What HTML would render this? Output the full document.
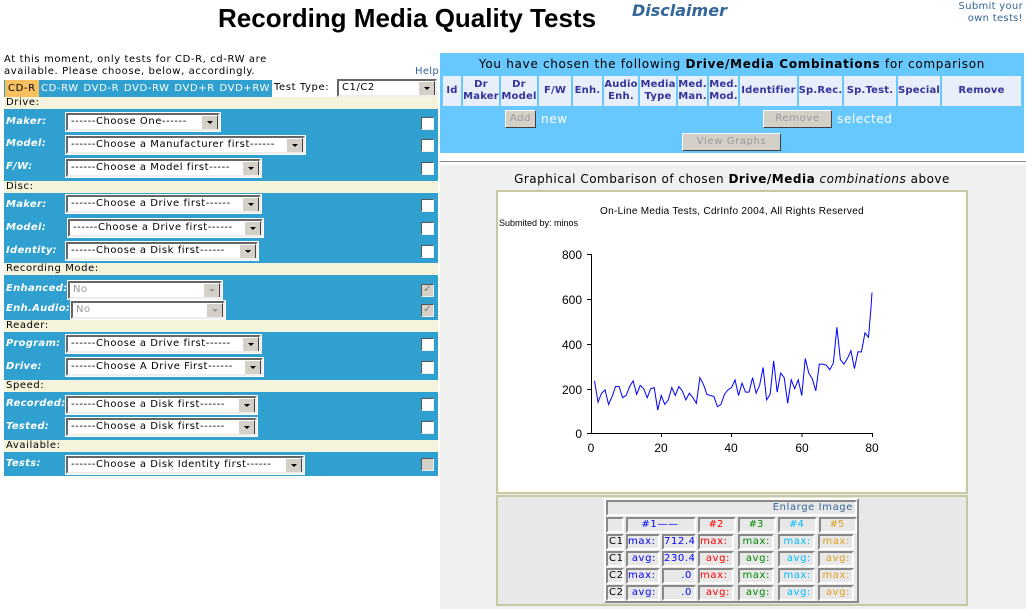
<!DOCTYPE html>
<html><head><meta charset="utf-8"><style>
*{box-sizing:border-box;margin:0;padding:0}
body{width:1026px;height:609px;background:#fff;position:relative;overflow:hidden;font-family:"DejaVu Sans","Liberation Sans",sans-serif;font-size:10px;color:#000;letter-spacing:0.6px}
.a{position:absolute;white-space:nowrap}
.beige{position:absolute;left:4px;width:434px;background:#f5f3dc;height:12px;line-height:12px;padding-left:2px;font-size:10px}
.blue{position:absolute;left:4px;width:434px;background:#2fa0d0}
.lbl{position:absolute;left:6px;color:#fff;font-weight:bold;font-style:italic;font-size:10px;letter-spacing:0.3px}
.sel{position:absolute;height:18px;background:#fff;border:2px solid;border-color:#666 #eee #eee #666;font-size:10px;line-height:14px;padding-left:3px;outline:1px solid #fff;letter-spacing:0.55px;overflow:hidden}
.sel::after{content:"";position:absolute;right:0;top:0;width:15px;height:14px;background:#d4d0c8;border:1px solid;border-color:#fff #404040 #404040 #fff}
.sel::before{content:"";position:absolute;right:5px;top:6px;border:3px solid transparent;border-top:3px solid #000;z-index:2}
.dis{color:#999}
.dis::before{border-top-color:#999}
.cb{position:absolute;left:421px;width:13px;height:13px;background:#fff;border:1px solid;border-color:#555 #eee #eee #555}
.cbd{background:#d4d0c8;color:#777;font-size:10px;line-height:10px;text-align:center;letter-spacing:0}
.th{position:absolute;top:76px;height:30px;background:#e8eefa;color:#333399;font-weight:bold;font-size:10px;line-height:12px;text-align:center;display:flex;align-items:center;justify-content:center;letter-spacing:0.2px}
.btn{position:absolute;background:#d4d0c8;border:1px solid;border-color:#fff #404040 #404040 #fff;color:#999;font-size:10px;text-align:center;line-height:16px}
.c{position:absolute;height:16px;border:2px solid;border-color:#888 #fff #fff #888;font-size:10px;line-height:12px;text-align:right;padding-right:2px;background:#e8e8e8}
svg{letter-spacing:0}
</style></head><body>
<div class="a" style="left:218px;top:3px;font-family:'Liberation Sans',sans-serif;font-weight:bold;font-size:26px;letter-spacing:0">Recording Media Quality Tests</div>
<div class="a" style="left:632px;top:1px;font-weight:bold;font-style:italic;font-size:16px;color:#336699;letter-spacing:0">Disclaimer</div>
<div class="a" style="right:3px;top:1px;font-size:10px;color:#336699;text-align:right;line-height:12px;letter-spacing:0.3px">Submit your<br>own tests!</div>

<div class="a" style="left:4px;top:54px;font-size:10px;line-height:12px">At this moment, only tests for CD-R, cd-RW are<br>available. Please choose, below, accordingly.</div>
<div class="a" style="left:415px;top:66px;font-size:10px;color:#336699;letter-spacing:0.3px">Help</div>
<div class="a" style="left:4px;top:80px;width:268px;height:17px;background:#2fa0d0"></div>
<div class="a" style="left:5px;top:80px;width:34px;height:17px;background:#f9c05f;line-height:17px;padding-left:3px">CD-R</div>
<div class="a" style="left:41px;top:80px;color:#fff;line-height:17px;word-spacing:1px">CD-RW DVD-R DVD-RW DVD+R DVD+RW</div>
<div class="a" style="left:274px;top:82px">Test Type:</div>
<div class="sel" style="left:337px;top:79px;width:100px">C1/C2</div>

<div class="beige" style="top:97px">Drive:</div>
<div class="blue" style="top:109px;height:72px"></div>
<div class="lbl" style="top:116px">Maker:</div><div class="sel" style="left:66px;top:113px;width:154px">------Choose One------</div><div class="cb" style="top:117px"></div>
<div class="lbl" style="top:138px">Model:</div><div class="sel" style="left:66px;top:136px;width:239px">------Choose a Manufacturer first------</div><div class="cb" style="top:139px"></div>
<div class="lbl" style="top:161px">F/W:</div><div class="sel" style="left:66px;top:159px;width:195px">------Choose a Model first-----</div><div class="cb" style="top:162px"></div>

<div class="beige" style="top:181px">Disc:</div>
<div class="blue" style="top:193px;height:70px"></div>
<div class="lbl" style="top:199px">Maker:</div><div class="sel" style="left:66px;top:195px;width:195px">------Choose a Drive first------</div><div class="cb" style="top:199px"></div>
<div class="lbl" style="top:222px">Model:</div><div class="sel" style="left:68px;top:219px;width:195px">------Choose a Drive first------</div><div class="cb" style="top:222px"></div>
<div class="lbl" style="top:245px">Identity:</div><div class="sel" style="left:66px;top:242px;width:192px">------Choose a Disk first------</div><div class="cb" style="top:245px"></div>

<div class="beige" style="top:263px">Recording Mode:</div>
<div class="blue" style="top:275px;height:45px"></div>
<div class="lbl" style="top:283px">Enhanced:</div><div class="sel dis" style="left:68px;top:281px;width:154px">No</div><div class="cb cbd" style="top:284px">✓</div>
<div class="lbl" style="top:303px">Enh.Audio:</div><div class="sel dis" style="left:71px;top:301px;width:154px">No</div><div class="cb cbd" style="top:304px">✓</div>

<div class="beige" style="top:320px">Reader:</div>
<div class="blue" style="top:332px;height:48px"></div>
<div class="lbl" style="top:338px">Program:</div><div class="sel" style="left:66px;top:335px;width:195px">------Choose a Drive first------</div><div class="cb" style="top:338px"></div>
<div class="lbl" style="top:361px">Drive:</div><div class="sel" style="left:66px;top:358px;width:197px">------Choose A Drive First------</div><div class="cb" style="top:361px"></div>

<div class="beige" style="top:380px">Speed:</div>
<div class="blue" style="top:392px;height:48px"></div>
<div class="lbl" style="top:398px">Recorded:</div><div class="sel" style="left:66px;top:396px;width:191px">------Choose a Disk first------</div><div class="cb" style="top:398px"></div>
<div class="lbl" style="top:421px">Tested:</div><div class="sel" style="left:66px;top:418px;width:191px">------Choose a Disk first------</div><div class="cb" style="top:421px"></div>

<div class="beige" style="top:440px">Available:</div>
<div class="blue" style="top:452px;height:24px"></div>
<div class="lbl" style="top:458px">Tests:</div><div class="sel" style="left:66px;top:456px;width:238px">------Choose a Disk Identity first------</div><div class="cb cbd" style="top:458px"></div>

<!-- right -->
<div class="a" style="left:440px;top:53px;width:584px;height:100px;background:#66c8fc"></div>
<div class="a" style="left:440px;top:57px;width:584px;text-align:center;font-size:12px;letter-spacing:0.7px">You have chosen the following <b>Drive/Media Combinations</b> for comparison</div>
<div class="th" style="left:443px;width:18px">Id</div>
<div class="th" style="left:463px;width:36px">Dr<br>Maker</div>
<div class="th" style="left:501px;width:36px">Dr<br>Model</div>
<div class="th" style="left:539px;width:32px">F/W</div>
<div class="th" style="left:573px;width:29px">Enh.</div>
<div class="th" style="left:604px;width:34px">Audio<br>Enh.</div>
<div class="th" style="left:640px;width:36px">Media<br>Type</div>
<div class="th" style="left:678px;width:29px">Med.<br>Man.</div>
<div class="th" style="left:709px;width:29px">Med.<br>Mod.</div>
<div class="th" style="left:740px;width:57px">Identifier</div>
<div class="th" style="left:799px;width:43px">Sp.Rec.</div>
<div class="th" style="left:844px;width:52px">Sp.Test.</div>
<div class="th" style="left:898px;width:42px">Special</div>
<div class="th" style="left:942px;width:79px">Remove</div>
<div class="btn" style="left:505px;top:110px;width:31px;height:18px">Add</div>
<div class="a" style="left:541px;top:112px;color:#fff;font-size:12px">new</div>
<div class="btn" style="left:763px;top:110px;width:69px;height:18px">Remove</div>
<div class="a" style="left:837px;top:112px;color:#fff;font-size:12px">selected</div>
<div class="btn" style="left:682px;top:133px;width:99px;height:18px">View Graphs</div>
<div class="a" style="left:440px;top:161px;width:586px;height:1px;background:#888"></div>
<div class="a" style="left:440px;top:165px;width:586px;height:444px;background:#f0f0f0"></div>
<div class="a" style="left:440px;top:172px;width:584px;text-align:center;font-size:12px;letter-spacing:0.5px">Graphical Combarison of chosen <b>Drive/Media</b> <i>combinations</i> above</div>
<div class="a" style="left:496px;top:190px;width:472px;height:304px;background:#fff;border:2px solid #c8c8a0"></div>
<svg class="a" style="left:496px;top:190px" width="472" height="304" font-family="Liberation Sans,sans-serif">
<text x="236" y="24" font-size="10" text-anchor="middle" letter-spacing="0.3">On-Line Media Tests, CdrInfo 2004, All Rights Reserved</text>
<text x="3" y="36" font-size="9">Submited by: minos</text>
<g stroke="#000" stroke-width="1" fill="none">
<path d="M95.5 64V243.5H376.5M91 64.5h5M91 109.5h5M91 154.5h5M91 199.5h5M91 243.5h5M165.5 243v4M235.5 243v4M306 243v4M376.5 243v4"/>
</g>
<g font-size="12" text-anchor="end"><text x="86" y="69">800</text><text x="86" y="114">600</text><text x="86" y="159">400</text><text x="86" y="204">200</text><text x="86" y="248">0</text></g>
<g font-size="12" text-anchor="middle"><text x="95" y="262">0</text><text x="165" y="262">20</text><text x="235" y="262">40</text><text x="306" y="262">60</text><text x="376" y="262">80</text></g>
<g transform="translate(95,243.5) scale(3.5125,-0.22375)">
<polyline vector-effect="non-scaling-stroke" stroke="#0000ff" stroke-width="1" fill="none" points="1,235 2,140 3,180 4,195 5,130 6,165 7,210 8,210 9,160 10,170 11,210 12,235 13,175 14,215 15,200 16,160 17,200 18,205 19,105 20,170 21,130 22,150 23,205 24,170 25,210 26,190 27,150 28,180 29,160 30,135 31,250 32,220 33,175 34,170 35,165 36,120 37,130 38,175 39,195 40,205 41,240 42,170 43,225 44,185 45,185 46,250 47,180 48,215 49,295 50,150 51,175 52,325 53,185 54,270 55,250 56,135 57,240 58,200 59,240 60,170 61,335 62,270 63,245 64,190 65,310 66,310 67,305 68,285 69,315 70,475 71,330 72,310 73,335 74,370 75,290 76,365 77,365 78,450 79,430 79.7,560 80,630"/>
</g>
</svg>
<div class="a" style="left:496px;top:495px;width:472px;height:111px;background:#e8e8e8;border:2px solid #c8c8a0"></div>
<div class="a" style="left:604px;top:498px;width:255px;height:105px;border:2px solid;border-color:#fff #888 #888 #fff"></div>
<div class="c" style="left:606px;top:500px;width:251px;text-align:right;color:#336699">Enlarge Image</div>
<div class="c" style="left:606px;top:517px;width:18px"></div>
<div class="c" style="left:626px;top:517px;width:70px;text-align:center;color:#00f">#1——</div>
<div class="c" style="left:698px;top:517px;width:38px;text-align:center;color:#f00;letter-spacing:0">#2——</div>
<div class="c" style="left:738px;top:517px;width:38px;text-align:center;color:#080;letter-spacing:0">#3——</div>
<div class="c" style="left:778px;top:517px;width:39px;text-align:center;color:#0bf;letter-spacing:0">#4——</div>
<div class="c" style="left:819px;top:517px;width:38px;text-align:center;color:#e0a020;letter-spacing:0">#5——</div>

<div class="c" style="left:606px;top:534px;width:18px;text-align:left;padding-left:1px">C1</div>
<div class="c" style="left:626px;top:534px;width:34px;text-align:left;color:#00f">max:</div>
<div class="c" style="left:662px;top:534px;width:34px;color:#00f">712.4</div>
<div class="c" style="left:698px;top:534px;width:36px;text-align:left;color:#f00">max:</div>
<div class="c" style="left:738px;top:534px;width:36px;color:#080">max:</div>
<div class="c" style="left:778px;top:534px;width:37px;color:#0bf">max:</div>
<div class="c" style="left:818px;top:534px;width:36px;color:#e0a020">max:</div>

<div class="c" style="left:606px;top:551px;width:18px;text-align:left;padding-left:1px">C1</div>
<div class="c" style="left:626px;top:551px;width:34px;color:#00f">avg:</div>
<div class="c" style="left:662px;top:551px;width:34px;color:#00f">230.4</div>
<div class="c" style="left:698px;top:551px;width:36px;color:#f00">avg:</div>
<div class="c" style="left:738px;top:551px;width:36px;color:#080">avg:</div>
<div class="c" style="left:778px;top:551px;width:37px;color:#0bf">avg:</div>
<div class="c" style="left:818px;top:551px;width:36px;color:#e0a020">avg:</div>

<div class="c" style="left:606px;top:568px;width:18px;text-align:left;padding-left:1px">C2</div>
<div class="c" style="left:626px;top:568px;width:34px;text-align:left;color:#00f">max:</div>
<div class="c" style="left:662px;top:568px;width:34px;color:#00f">.0</div>
<div class="c" style="left:698px;top:568px;width:36px;text-align:left;color:#f00">max:</div>
<div class="c" style="left:738px;top:568px;width:36px;color:#080">max:</div>
<div class="c" style="left:778px;top:568px;width:37px;color:#0bf">max:</div>
<div class="c" style="left:818px;top:568px;width:36px;color:#e0a020">max:</div>

<div class="c" style="left:606px;top:585px;width:18px;text-align:left;padding-left:1px">C2</div>
<div class="c" style="left:626px;top:585px;width:34px;color:#00f">avg:</div>
<div class="c" style="left:662px;top:585px;width:34px;color:#00f">.0</div>
<div class="c" style="left:698px;top:585px;width:36px;color:#f00">avg:</div>
<div class="c" style="left:738px;top:585px;width:36px;color:#080">avg:</div>
<div class="c" style="left:778px;top:585px;width:37px;color:#0bf">avg:</div>
<div class="c" style="left:818px;top:585px;width:36px;color:#e0a020">avg:</div>
</body></html>
